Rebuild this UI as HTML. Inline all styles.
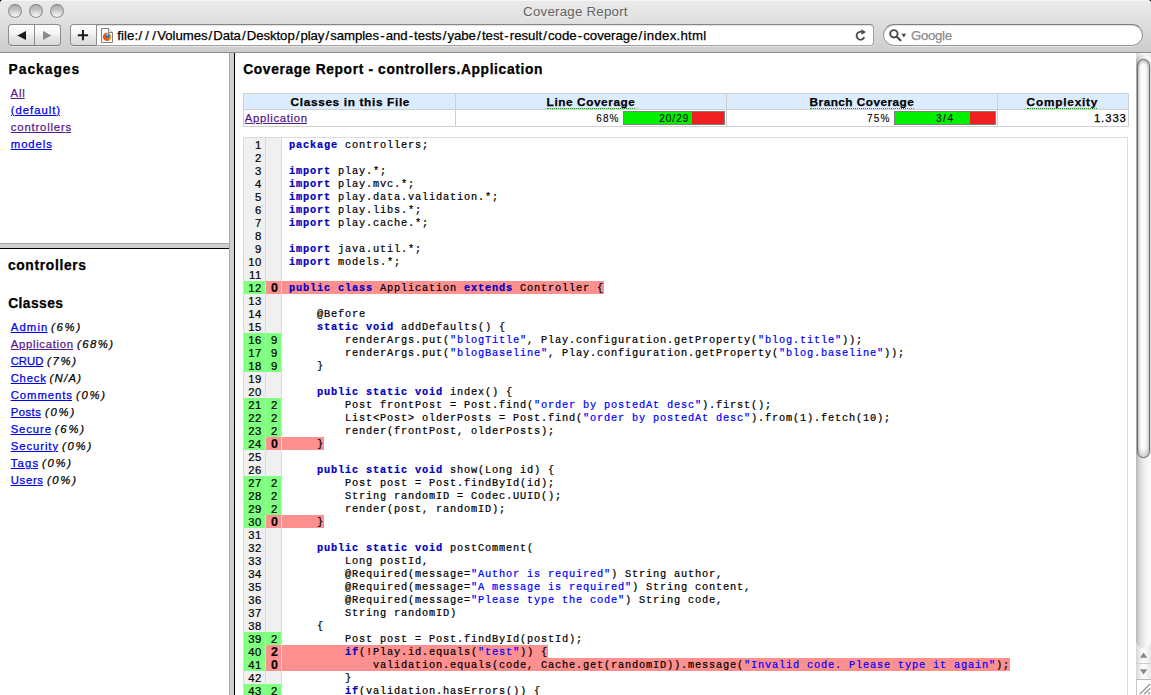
<!DOCTYPE html>
<html>
<head>
<meta charset="utf-8">
<title>Coverage Report</title>
<style>
html,body{margin:0;padding:0;}
body{width:1151px;height:695px;overflow:hidden;position:relative;background:#fff;font-family:"Liberation Sans",sans-serif;}
.t{position:absolute;white-space:pre;line-height:18px;height:18px;text-decoration-thickness:1px;-webkit-text-stroke:.25px currentColor;}
a.t{cursor:pointer;}
.ttl{-webkit-text-stroke:0;text-shadow:0 1px 0 rgba(255,255,255,.55);}
.sm{-webkit-text-stroke:.1px currentColor;}
.dfn{border-bottom:1px dotted #00aa00;height:15px;}
.abs{position:absolute;}
/* window chrome */
#corners{left:0;top:0;width:1151px;height:10px;background:#000;}
#chrome{left:0;top:0;width:1151px;height:52px;border-radius:3.5px 3.5px 0 0;border-bottom:1px solid #8c8c8c;box-shadow:inset 0 1px 0 #f5f5f5;
 background:linear-gradient(#ebebeb 0,#e6e6e6 10px,#dedede 24px,#d6d6d6 36px,#cccccc 52px);}
.light{top:4px;width:12px;height:12px;border-radius:50%;border:1px solid #8e8e8e;border-top-color:#7f7f7f;
 background:radial-gradient(ellipse 70% 55% at 50% 95%,#f7f7f7 0,#e2e2e2 50%,rgba(226,226,226,0) 100%),linear-gradient(#adadad,#c9c9c9 55%,#dddddd);box-shadow:0 1px 0 rgba(255,255,255,.5);}
.btn{border:1px solid #8d8d8d;border-bottom-color:#7d7d7d;background:linear-gradient(#ffffff 0,#f5f5f5 42%,#e7e7e7 60%,#dadada 100%);box-sizing:border-box;}
#nav{left:8px;top:24px;width:53px;height:22px;border-radius:4px;box-shadow:0 1px 0 rgba(255,255,255,.45);}
#nav i{position:absolute;left:25px;top:0;width:1px;height:20px;background:#8d8d8d;}
#plus{left:70px;top:24px;width:27px;height:22px;border-radius:4px 0 0 4px;box-shadow:0 1px 0 rgba(255,255,255,.45);}
#addr{left:97px;top:24px;width:777px;height:22px;border-radius:0 4px 4px 0;border:1px solid #a2a2a2;border-left:0;border-top-color:#858585;box-sizing:border-box;background:#fff;box-shadow:0 1px 0 rgba(255,255,255,.45), inset 0 1px 1px rgba(0,0,0,.12);}
#search{left:883px;top:24px;width:260px;height:22px;border-radius:11px;border:1px solid #9a9a9a;border-top-color:#7e7e7e;box-sizing:border-box;background:#fff;box-shadow:0 1px 0 rgba(255,255,255,.45), inset 0 1px 1px rgba(0,0,0,.12);}
/* frames */
#hdiv{left:0;top:243px;width:229px;height:4px;background:#d0d0d0;border-top:1px solid #a8a8a8;border-bottom:1px solid #000;}
#vdiv{left:229px;top:53px;width:4px;height:642px;background:#d0d0d0;border-left:1px solid #a8a8a8;border-right:1px solid #000;}
/* report table */
#report{left:243px;top:93px;width:885px;height:34px;border-collapse:collapse;table-layout:fixed;}
#report td{border:1px solid #d0d0d0;padding:0;}
#report tr.hd td{background:#dcecff;height:15px;}
#report tr.vl td{height:16px;}
.bar{top:111px;width:100px;height:12px;border:1px solid #808080;background:#f02020;}
.bar b{display:block;height:12px;background:#00f000;}
/* source */
#srcbox{left:243px;top:137px;width:883px;height:600px;border:1px solid #dcdcdc;}
#src{left:244px;top:138px;width:883px;}
.r{height:13px;white-space:nowrap;overflow:hidden;}
.r span.n,.r span.h{float:left;height:13px;line-height:15px;overflow:hidden;font-size:11.3px;text-align:right;background:#f0f0f0;border-right:1px solid #dcdcdc;box-sizing:border-box;letter-spacing:.64px;-webkit-text-stroke:.2px currentColor;}
.r span.n{width:22px;padding-right:3px;}
.r span.h{width:16px;padding-right:3px;}
.r span.c{background:#80ff80;}
.r span.r{background:#ff9090;font-weight:bold;font-size:12.4px;letter-spacing:.6px;padding-right:2.6px;}
.r pre{margin:0;float:left;height:13px;line-height:15px;font-family:"Liberation Mono",monospace;font-size:10.3px;letter-spacing:.82px;-webkit-text-stroke:.22px currentColor;}
.r pre .u{background:#ff9090;display:inline-block;height:13px;}
.k{color:#0000c0;font-weight:bold;}
.s{color:#0000ff;}
/* scrollbar */
#sb{left:1136px;top:53px;width:15px;height:642px;background:linear-gradient(90deg,#d6d6d6 0,#f1f1f1 30%,#fdfdfd 50%,#f3f3f3 75%,#e6e6e6 100%);}
#track{left:1136px;top:54px;width:15px;height:594px;border-radius:7.5px;background:linear-gradient(90deg,#b4b4b4 0,#c9c9c9 12%,#dedede 30%,#eeeeee 55%,#f8f8f8 80%,#fbfbfb 100%);}
#thumb{left:1137px;top:59px;width:11px;height:397px;border:1px solid #6e6e6e;border-radius:7px;
 background:linear-gradient(90deg,#c6c6c6 0,#ececec 16%,#ffffff 36%,#fbfbfb 60%,#ececec 84%,#d6d6d6 100%);
 box-shadow:inset 0 3px 3px -1px rgba(0,0,0,.28),inset 0 -7px 6px -4px rgba(0,0,0,.2),0 0 0 .5px rgba(110,110,110,.45);}
</style>
</head>
<body>
<!-- ======= window chrome ======= -->
<div id="corners" class="abs"></div>
<div id="chrome" class="abs">
  <div class="abs light" style="left:8px"></div>
  <div class="abs light" style="left:29px"></div>
  <div class="abs light" style="left:50px"></div>
  <div id="nav" class="abs btn"><i></i>
    <svg class="abs" style="left:0;top:0" width="51" height="20" viewBox="0 0 51 20">
      <path d="M17 6 L17 15 L8.400 10.500 Z" fill="#1a1a1a"/>
      <path d="M34 6 L34 15 L42.400 10.500 Z" fill="#8c8c8c"/>
    </svg>
  </div>
  <div id="plus" class="abs btn">
    <svg class="abs" style="left:0;top:0" width="27" height="20" viewBox="0 0 27 20"><path d="M6.800 10.300h10.300M11.950 5v10.300" stroke="#1a1a1a" stroke-width="2" fill="none"/></svg>
  </div>
  <div id="addr" class="abs">
    <svg class="abs" style="left:4px;top:3px" width="13" height="16" viewBox="0 0 13 16">
      <path d="M.5 .5h7l4 4v10h-11z" fill="#fff" stroke="#808080"/>
      <path d="M7.500 .5v4h4" fill="#f4f4f4" stroke="#808080"/>
      <circle cx="6" cy="8.900" r="4.200" fill="#e55b0c"/>
      <path d="M6 4.900a4 4 0 0 1 0 8a4.500 4.500 0 0 0 2.500-4.500a3 3 0 0 0-2.500-3.500z" fill="#f6a51f"/>
      <circle cx="6.500" cy="7.900" r="2.100" fill="#2f6fcc"/>
      <circle cx="6.300" cy="6.600" r="1.100" fill="#9bd8f7"/>
      <path d="M3.300 7.200c.2 1.500 1 2.300 2.200 2.500c1.100.2 1.800.9 1.600 2.000c-.1.700-.7 1.100-1.400 1.100c-2.300-.100-3.600-2-3.400-4z" fill="#e55b0c"/>
    </svg>
    <svg class="abs" style="left:758px;top:4px" width="12" height="13" viewBox="0 0 12 13">
      <path d="M9.300 8.200a4 4 0 1 1-1.300-4.700" fill="none" stroke="#4a4a4a" stroke-width="1.8"/>
      <path d="M6.300 .3l4.700 2.600-4.400 2.800z" fill="#4a4a4a"/>
    </svg>
  </div>
  <div id="search" class="abs">
    <svg class="abs" style="left:5px;top:4px" width="20" height="14" viewBox="0 0 20 14">
      <circle cx="4.900" cy="4.800" r="3.700" fill="none" stroke="#484848" stroke-width="1.900"/>
      <path d="M7.800 7.700l3.700 3.600" stroke="#484848" stroke-width="2.200" stroke-linecap="round"/>
      <path d="M12.400 4.700h4.800l-2.400 3.900z" fill="#484848"/>
    </svg>
  </div>
<span class="t ttl" style="left:523.10px;top:2.50px;font-size:13.3px;letter-spacing:0.224px;color:#626262;">Coverage Repor<span style="letter-spacing:0">t</span></span>
<span class="t" style="left:117.30px;top:26.50px;font-size:13.2px;letter-spacing:0.067px;color:#000;">file:</span>
<span class="t" style="left:138.50px;top:26.50px;font-size:13.2px;letter-spacing:3.150px;color:#000;">//<span style="letter-spacing:0">/</span></span>
<span class="t" style="left:157.30px;top:26.50px;font-size:13.2px;letter-spacing:-0.059px;color:#000;">Volumes<i style="font-style:normal;margin:0 1.1px">/</i>Data<i style="font-style:normal;margin:0 1.1px">/</i>Desktop<i style="font-style:normal;margin:0 1.1px">/</i>play<i style="font-style:normal;margin:0 1.1px">/</i>samples</span>
<span class="t" style="left:379.20px;top:26.50px;font-size:13.2px;letter-spacing:-0.059px;color:#000;"><i style="font-style:normal;margin:0 1.1px">-</i>and<i style="font-style:normal;margin:0 1.1px">-</i>tests<i style="font-style:normal;margin:0 1.1px">/</i>yabe<i style="font-style:normal;margin:0 1.1px">/</i></span>
<span class="t" style="left:481.90px;top:26.50px;font-size:13.2px;letter-spacing:0.008px;color:#000;">test<i style="font-style:normal;margin:0 1.1px">-</i>result<i style="font-style:normal;margin:0 1.1px">/</i>code<i style="font-style:normal;margin:0 1.1px">-</i>coverage<i style="font-style:normal;margin:0 1.1px">/</i></span>
<span class="t" style="left:643.60px;top:26.50px;font-size:13.2px;letter-spacing:0.277px;color:#000;">index.html</span>
<span class="t" style="left:911.00px;top:26.50px;font-size:13.2px;letter-spacing:-0.306px;color:#8c8c8c;">Googl<span style="letter-spacing:0">e</span></span>
</div>

<!-- ======= left top frame : packages ======= -->
<div id="packages">
<span class="t" style="left:8.50px;top:60.50px;font-size:13.8px;letter-spacing:1.004px;color:#000;font-weight:bold;">Package<span style="letter-spacing:0">s</span></span>
<a class="t" style="left:10.60px;top:84.00px;font-size:11.3px;letter-spacing:0.769px;color:#551a8b;text-decoration:underline;">Al<span style="letter-spacing:0">l</span></a>
<a class="t" style="left:10.80px;top:101.00px;font-size:11.3px;letter-spacing:0.981px;color:#0000ee;text-decoration:underline;">(default<span style="letter-spacing:0">)</span></a>
<a class="t" style="left:10.80px;top:118.00px;font-size:11.3px;letter-spacing:0.827px;color:#551a8b;text-decoration:underline;">controller<span style="letter-spacing:0">s</span></a>
<a class="t" style="left:10.80px;top:135.00px;font-size:11.3px;letter-spacing:0.936px;color:#0000ee;text-decoration:underline;">model<span style="letter-spacing:0">s</span></a>
</div>
<div id="hdiv" class="abs"></div>
<!-- ======= left bottom frame : classes ======= -->
<div id="classes">
<span class="t" style="left:7.90px;top:256.50px;font-size:13.8px;letter-spacing:0.679px;color:#000;font-weight:bold;">controller<span style="letter-spacing:0">s</span></span>
<span class="t" style="left:8.20px;top:294.50px;font-size:13.8px;letter-spacing:0.438px;color:#000;font-weight:bold;">Classe<span style="letter-spacing:0">s</span></span>
<a class="t" style="left:10.70px;top:318.00px;font-size:11.3px;letter-spacing:1.167px;color:#0000ee;text-decoration:underline;">Admi<span style="letter-spacing:0">n</span></a>
<span class="t" style="left:51.00px;top:318.00px;font-size:11.3px;letter-spacing:1.780px;color:#000;font-style:italic;">(6%<span style="letter-spacing:0">)</span></span>
<a class="t" style="left:10.70px;top:335.00px;font-size:11.3px;letter-spacing:0.713px;color:#551a8b;text-decoration:underline;">Applicatio<span style="letter-spacing:0">n</span></a>
<span class="t" style="left:77.00px;top:335.00px;font-size:11.3px;letter-spacing:1.465px;color:#000;font-style:italic;">(68%<span style="letter-spacing:0">)</span></span>
<a class="t" style="left:10.70px;top:352.00px;font-size:11.3px;letter-spacing:-0.014px;color:#0000ee;text-decoration:underline;">CRU<span style="letter-spacing:0">D</span></a>
<span class="t" style="left:46.90px;top:352.00px;font-size:11.3px;letter-spacing:1.780px;color:#000;font-style:italic;">(7%<span style="letter-spacing:0">)</span></span>
<a class="t" style="left:10.70px;top:369.00px;font-size:11.3px;letter-spacing:0.767px;color:#0000ee;text-decoration:underline;">Chec<span style="letter-spacing:0">k</span></a>
<span class="t" style="left:49.60px;top:369.00px;font-size:11.3px;letter-spacing:1.260px;color:#000;font-style:italic;">(N/A<span style="letter-spacing:0">)</span></span>
<a class="t" style="left:10.70px;top:386.00px;font-size:11.3px;letter-spacing:0.954px;color:#0000ee;text-decoration:underline;">Comment<span style="letter-spacing:0">s</span></a>
<span class="t" style="left:75.90px;top:386.00px;font-size:11.3px;letter-spacing:1.780px;color:#000;font-style:italic;">(0%<span style="letter-spacing:0">)</span></span>
<a class="t" style="left:10.70px;top:403.00px;font-size:11.3px;letter-spacing:0.484px;color:#0000ee;text-decoration:underline;">Post<span style="letter-spacing:0">s</span></a>
<span class="t" style="left:45.00px;top:403.00px;font-size:11.3px;letter-spacing:1.780px;color:#000;font-style:italic;">(0%<span style="letter-spacing:0">)</span></span>
<a class="t" style="left:10.70px;top:420.00px;font-size:11.3px;letter-spacing:0.901px;color:#0000ee;text-decoration:underline;">Secur<span style="letter-spacing:0">e</span></a>
<span class="t" style="left:54.80px;top:420.00px;font-size:11.3px;letter-spacing:1.814px;color:#000;font-style:italic;">(6%<span style="letter-spacing:0">)</span></span>
<a class="t" style="left:10.70px;top:437.00px;font-size:11.3px;letter-spacing:0.941px;color:#0000ee;text-decoration:underline;">Securit<span style="letter-spacing:0">y</span></a>
<span class="t" style="left:61.90px;top:437.00px;font-size:11.3px;letter-spacing:1.814px;color:#000;font-style:italic;">(0%<span style="letter-spacing:0">)</span></span>
<a class="t" style="left:10.70px;top:454.00px;font-size:11.3px;letter-spacing:1.175px;color:#0000ee;text-decoration:underline;">Tag<span style="letter-spacing:0">s</span></a>
<span class="t" style="left:42.00px;top:454.00px;font-size:11.3px;letter-spacing:1.680px;color:#000;font-style:italic;">(0%<span style="letter-spacing:0">)</span></span>
<a class="t" style="left:10.70px;top:471.00px;font-size:11.3px;letter-spacing:0.700px;color:#0000ee;text-decoration:underline;">User<span style="letter-spacing:0">s</span></a>
<span class="t" style="left:46.90px;top:471.00px;font-size:11.3px;letter-spacing:1.714px;color:#000;font-style:italic;">(0%<span style="letter-spacing:0">)</span></span>
</div>
<div id="vdiv" class="abs"></div>

<!-- ======= main frame ======= -->
<div id="main">
<table id="report" class="abs" cellspacing="0"><colgroup><col style="width:212px"><col style="width:271px"><col style="width:271px"><col style="width:131px"></colgroup>
<tr class="hd"><td></td><td></td><td></td><td></td></tr>
<tr class="vl"><td></td><td></td><td></td><td></td></tr>
</table>
<div class="abs bar" style="left:623px"><b style="width:68px"></b></div>
<div class="abs bar" style="left:894px"><b style="width:75px"></b></div>
<span class="t" style="left:243.20px;top:60.50px;font-size:13.8px;letter-spacing:0.638px;color:#000;font-weight:bold;">Coverage Report - controllers.Applicatio<span style="letter-spacing:0">n</span></span>
<span class="t" style="left:290.60px;top:93.00px;font-size:11.8px;letter-spacing:0.662px;color:#000;font-weight:bold;">Classes in this Fil<span style="letter-spacing:0">e</span></span>
<span class="t dfn" style="left:546.60px;top:93.00px;font-size:11.8px;letter-spacing:0.584px;color:#000;font-weight:bold;">Line Coverag<span style="letter-spacing:0">e</span></span>
<span class="t dfn" style="left:809.60px;top:93.00px;font-size:11.8px;letter-spacing:0.465px;color:#000;font-weight:bold;">Branch Coverag<span style="letter-spacing:0">e</span></span>
<span class="t dfn" style="left:1026.60px;top:93.00px;font-size:11.8px;letter-spacing:0.801px;color:#000;font-weight:bold;">Complexit<span style="letter-spacing:0">y</span></span>
<a class="t" style="left:244.80px;top:109.00px;font-size:11.3px;letter-spacing:0.693px;color:#551a8b;text-decoration:underline;">Applicatio<span style="letter-spacing:0">n</span></a>
<span class="t sm" style="left:596.30px;top:109.50px;font-size:10px;letter-spacing:1.042px;color:#000;">68<span style="letter-spacing:0">%</span></span>
<span class="t sm" style="left:659.20px;top:109.50px;font-size:10px;letter-spacing:1.017px;color:#000;">20/2<span style="letter-spacing:0">9</span></span>
<span class="t sm" style="left:866.90px;top:109.50px;font-size:10px;letter-spacing:1.242px;color:#000;">75<span style="letter-spacing:0">%</span></span>
<span class="t sm" style="left:935.90px;top:109.50px;font-size:10px;letter-spacing:1.647px;color:#000;">3/<span style="letter-spacing:0">4</span></span>
<span class="t" style="left:1093.90px;top:109.00px;font-size:11.3px;letter-spacing:0.930px;color:#000;">1.33<span style="letter-spacing:0">3</span></span>
<div id="srcbox" class="abs"></div>
<div id="src" class="abs">
<div class="r"><span class="n">1</span><span class="h"></span><pre>&nbsp;<span class="k">package</span> controllers;</pre></div>
<div class="r"><span class="n">2</span><span class="h"></span><pre>&nbsp;</pre></div>
<div class="r"><span class="n">3</span><span class="h"></span><pre>&nbsp;<span class="k">import</span> play.*;</pre></div>
<div class="r"><span class="n">4</span><span class="h"></span><pre>&nbsp;<span class="k">import</span> play.mvc.*;</pre></div>
<div class="r"><span class="n">5</span><span class="h"></span><pre>&nbsp;<span class="k">import</span> play.data.validation.*;</pre></div>
<div class="r"><span class="n">6</span><span class="h"></span><pre>&nbsp;<span class="k">import</span> play.libs.*;</pre></div>
<div class="r"><span class="n">7</span><span class="h"></span><pre>&nbsp;<span class="k">import</span> play.cache.*;</pre></div>
<div class="r"><span class="n">8</span><span class="h"></span><pre>&nbsp;</pre></div>
<div class="r"><span class="n">9</span><span class="h"></span><pre>&nbsp;<span class="k">import</span> java.util.*;</pre></div>
<div class="r"><span class="n">10</span><span class="h"></span><pre>&nbsp;<span class="k">import</span> models.*;</pre></div>
<div class="r"><span class="n">11</span><span class="h"></span><pre>&nbsp;</pre></div>
<div class="r"><span class="n c">12</span><span class="h r">0</span><pre><span class="u">&nbsp;<span class="k">public</span> <span class="k">class</span> Application <span class="k">extends</span> Controller {</span></pre></div>
<div class="r"><span class="n">13</span><span class="h"></span><pre>&nbsp;</pre></div>
<div class="r"><span class="n">14</span><span class="h"></span><pre>&nbsp;    @Before</pre></div>
<div class="r"><span class="n">15</span><span class="h"></span><pre>&nbsp;    <span class="k">static</span> <span class="k">void</span> addDefaults() {</pre></div>
<div class="r"><span class="n c">16</span><span class="h c">9</span><pre>&nbsp;        renderArgs.put(<span class="s">"blogTitle"</span>, Play.configuration.getProperty(<span class="s">"blog.title"</span>));</pre></div>
<div class="r"><span class="n c">17</span><span class="h c">9</span><pre>&nbsp;        renderArgs.put(<span class="s">"blogBaseline"</span>, Play.configuration.getProperty(<span class="s">"blog.baseline"</span>));</pre></div>
<div class="r"><span class="n c">18</span><span class="h c">9</span><pre>&nbsp;    }</pre></div>
<div class="r"><span class="n">19</span><span class="h"></span><pre>&nbsp;</pre></div>
<div class="r"><span class="n">20</span><span class="h"></span><pre>&nbsp;    <span class="k">public</span> <span class="k">static</span> <span class="k">void</span> index() {</pre></div>
<div class="r"><span class="n c">21</span><span class="h c">2</span><pre>&nbsp;        Post frontPost = Post.find(<span class="s">"order by postedAt desc"</span>).first();</pre></div>
<div class="r"><span class="n c">22</span><span class="h c">2</span><pre>&nbsp;        List&lt;Post&gt; olderPosts = Post.find(<span class="s">"order by postedAt desc"</span>).from(1).fetch(10);</pre></div>
<div class="r"><span class="n c">23</span><span class="h c">2</span><pre>&nbsp;        render(frontPost, olderPosts);</pre></div>
<div class="r"><span class="n c">24</span><span class="h r">0</span><pre><span class="u">&nbsp;    }</span></pre></div>
<div class="r"><span class="n">25</span><span class="h"></span><pre>&nbsp;</pre></div>
<div class="r"><span class="n">26</span><span class="h"></span><pre>&nbsp;    <span class="k">public</span> <span class="k">static</span> <span class="k">void</span> show(Long id) {</pre></div>
<div class="r"><span class="n c">27</span><span class="h c">2</span><pre>&nbsp;        Post post = Post.findById(id);</pre></div>
<div class="r"><span class="n c">28</span><span class="h c">2</span><pre>&nbsp;        String randomID = Codec.UUID();</pre></div>
<div class="r"><span class="n c">29</span><span class="h c">2</span><pre>&nbsp;        render(post, randomID);</pre></div>
<div class="r"><span class="n c">30</span><span class="h r">0</span><pre><span class="u">&nbsp;    }</span></pre></div>
<div class="r"><span class="n">31</span><span class="h"></span><pre>&nbsp;</pre></div>
<div class="r"><span class="n">32</span><span class="h"></span><pre>&nbsp;    <span class="k">public</span> <span class="k">static</span> <span class="k">void</span> postComment(</pre></div>
<div class="r"><span class="n">33</span><span class="h"></span><pre>&nbsp;        Long postId,</pre></div>
<div class="r"><span class="n">34</span><span class="h"></span><pre>&nbsp;        @Required(message=<span class="s">"Author is required"</span>) String author,</pre></div>
<div class="r"><span class="n">35</span><span class="h"></span><pre>&nbsp;        @Required(message=<span class="s">"A message is required"</span>) String content,</pre></div>
<div class="r"><span class="n">36</span><span class="h"></span><pre>&nbsp;        @Required(message=<span class="s">"Please type the code"</span>) String code,</pre></div>
<div class="r"><span class="n">37</span><span class="h"></span><pre>&nbsp;        String randomID)</pre></div>
<div class="r"><span class="n">38</span><span class="h"></span><pre>&nbsp;    {</pre></div>
<div class="r"><span class="n c">39</span><span class="h c">2</span><pre>&nbsp;        Post post = Post.findById(postId);</pre></div>
<div class="r"><span class="n c">40</span><span class="h r">2</span><pre><span class="u">&nbsp;        <span class="k">if</span>(!Play.id.equals(<span class="s">"test"</span>)) {</span></pre></div>
<div class="r"><span class="n c">41</span><span class="h r">0</span><pre><span class="u">&nbsp;            validation.equals(code, Cache.get(randomID)).message(<span class="s">"Invalid code. Please type it again"</span>);</span></pre></div>
<div class="r"><span class="n">42</span><span class="h"></span><pre>&nbsp;        }</pre></div>
<div class="r"><span class="n c">43</span><span class="h c">2</span><pre>&nbsp;        <span class="k">if</span>(validation.hasErrors()) {</pre></div>
</div>
</div>

<!-- ======= scrollbar ======= -->
<div id="sb" class="abs"></div>
<div id="track" class="abs"></div>
<div id="thumb" class="abs"></div>
<div class="abs" style="left:1136px;top:648px;width:15px;height:32px;">
  <svg width="15" height="32" viewBox="0 0 15 32" class="abs" style="left:0;top:0">
    <path d="M7.600 4.600l3.600 5.200h-7.200z" fill="#868686"/><path d="M0 15.500h15" stroke="#cdcdcd"/><path d="M7.600 26.500l3.600-5.200h-7.200z" fill="#868686"/><path d="M0 31.500h15" stroke="#b9b9b9"/>
  </svg>
</div>
<div class="abs" style="left:1136px;top:680px;width:15px;height:15px;background:#fff;border-left:1px solid #c6c6c6;box-sizing:border-box;">
  <svg width="14" height="15" viewBox="0 0 14 15" class="abs" style="left:0;top:0"><path d="M2.800 14.200L13.200 3.800M7.300 14.200L13.200 8.300M11.300 14.200l1.900-1.900" stroke="#808080" stroke-width="1.100" fill="none"/></svg>
</div>
</body>
</html>
